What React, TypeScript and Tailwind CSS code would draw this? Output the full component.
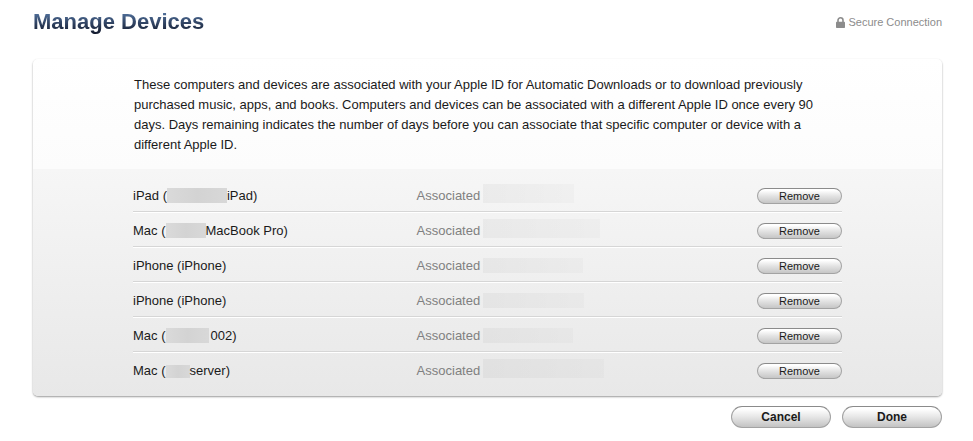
import type { FunctionComponent, JSX } from "react";

type Device = {
  kind: string;
  maskClass?: string;
  suffix: string;
  dateClass: string;
};

const devices: Device[] = [
  { kind: "iPad", maskClass: "w-[60px] h-[15px]", suffix: "iPad", dateClass: "w-[91px] h-[19px]" },
  { kind: "Mac", maskClass: "w-[40px] h-[15px]", suffix: "MacBook Pro", dateClass: "w-[117px] h-[19px]" },
  { kind: "iPhone", suffix: "iPhone", dateClass: "w-[100px] h-[15px]" },
  { kind: "iPhone", suffix: "iPhone", dateClass: "w-[101px] h-[15px]" },
  { kind: "Mac", maskClass: "w-[43px] h-[15px] mr-[2px]", suffix: "002", dateClass: "w-[90px] h-[15px]" },
  { kind: "Mac", maskClass: "w-[24px] h-[13px]", suffix: "server", dateClass: "w-[121px] h-[19px]" },
];

const LockIcon: FunctionComponent = (): JSX.Element => {
  return (
    <svg width="9" height="11" viewBox="0 0 9 11" aria-hidden="true">
      <path d="M2 5.5V3.3a2.5 2.5 0 0 1 5 0v2.2" fill="none" stroke="#8c8c8c" strokeWidth="1.6" />
      <rect x="0" y="4.8" width="9" height="6.2" rx="0.7" fill="#8c8c8c" />
    </svg>
  );
};

const DeviceRow: FunctionComponent<Device> = ({
  kind,
  maskClass,
  suffix,
  dateClass,
}: Device): JSX.Element => {
  return (
    <tr className="group h-[35px]">
      <td className="w-2/5 border-b border-transparent p-0 pt-1 group-not-last:border-[#d6d6d6] group-not-last:shadow-[0_1px_0_#fff]">
        <div className="flex h-4 items-end whitespace-pre">
          <span>{kind} (</span>
          {maskClass && (
            <span className={`${maskClass} mb-px shrink-0 bg-linear-to-r from-[#dadada] via-[#d3d3d3] to-[#d8d8d8]`} />
          )}
          <span>{suffix})</span>
        </div>
      </td>
      <td className="border-b border-transparent p-0 pt-1 text-[#808080] group-not-last:border-[#d6d6d6] group-not-last:shadow-[0_1px_0_#fff]">
        <div className="flex h-4 items-end">
          <span className="w-[66px]">Associated</span>
          <span className={`${dateClass} mb-px shrink-0 bg-linear-to-r from-black/4 via-black/3 to-black/2`} />
        </div>
      </td>
      <td className="border-b border-transparent p-0 pt-1 text-right group-not-last:border-[#d6d6d6] group-not-last:shadow-[0_1px_0_#fff]">
        <button
          type="button"
          className="inline-block h-4 w-[85px] rounded-full border border-[#a3a3a3] border-t-[#8b8b8b] bg-linear-to-b from-white from-10% via-[#e3e3e3] via-50% to-[#c6c6c6] align-middle text-[11px] leading-[14px]"
        >
          Remove
        </button>
      </td>
    </tr>
  );
};

const App: FunctionComponent = (): JSX.Element => {
  return (
    <main className="bg-white pt-2 pr-[31px] pb-3 pl-[33px] font-['Liberation_Sans',Arial,sans-serif] text-[13px] leading-4 text-[#1a1a1a]">
      <header className="flex h-[51px] items-start justify-between">
        <h1 className="bg-linear-to-b from-[#587aa8] from-10% to-[#141c30] to-90% bg-clip-text text-[22px] leading-7 font-bold text-transparent">
          Manage Devices
        </h1>
        <p className="flex h-7 items-center gap-[3px] text-[11px] text-[#8c8c8c]">
          <LockIcon />
          Secure Connection
        </p>
      </header>

      <section className="rounded-[5px] bg-[#f5f5f5] shadow-[0_1px_2px_rgba(0,0,0,0.4)]">
        <div className="rounded-t-[5px] bg-linear-to-b from-white to-[#fcfcfc] px-[101px] pt-4 pb-[14px]">
          <p className="leading-5">
            These computers and devices are associated with your Apple ID for Automatic Downloads or to download previously
            purchased music, apps, and books. Computers and devices can be associated with a different Apple ID once every 90
            days. Days remaining indicates the number of days before you can associate that specific computer or device with a
            different Apple ID.
          </p>
        </div>
        <div className="rounded-b-[5px] bg-linear-to-b from-[#f6f6f6] to-[#e8e8e8] px-[100px] pt-2 pb-[9px]">
          <table className="w-full table-fixed border-separate border-spacing-0" aria-label="Associated devices">
            <tbody>
              {devices.map((device, index) => (
                <DeviceRow key={index} {...device} />
              ))}
            </tbody>
          </table>
        </div>
      </section>

      <footer className="mt-[10px] flex justify-end gap-[11px]">
        {["Cancel", "Done"].map((label) => (
          <button
            key={label}
            type="button"
            className="h-[22px] w-[100px] rounded-full border border-[#a3a3a3] border-t-[#8b8b8b] bg-linear-to-b from-white from-10% via-[#e6e6e6] via-50% to-[#c3c3c3] text-xs leading-5 font-bold"
          >
            {label}
          </button>
        ))}
      </footer>
    </main>
  );
};

export default App;
